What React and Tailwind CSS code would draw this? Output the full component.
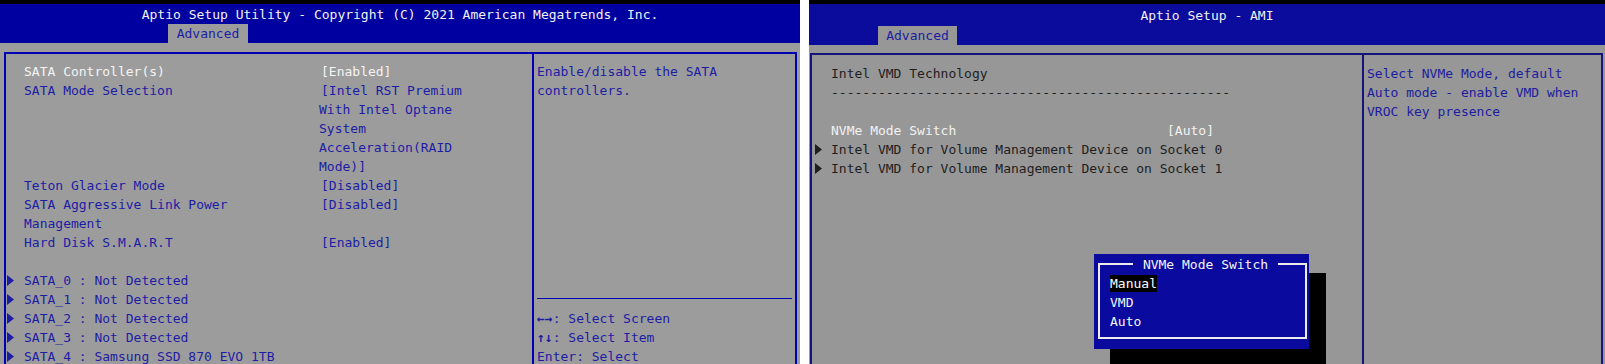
import React from 'react';

const mono = "font-['DejaVu_Sans_Mono',monospace] text-[13px] leading-[19px]";

// 좌측 화면 항목 (label, value lines, selected)
const sataItems = [
  { label: ['SATA Controller(s)'], value: ['[Enabled]'], active: true },
  { label: ['SATA Mode Selection'], value: ['[Intel RST Premium', 'With Intel Optane', 'System', 'Acceleration(RAID', 'Mode)]'] },
  { label: ['Teton Glacier Mode'], value: ['[Disabled]'] },
  { label: ['SATA Aggressive Link Power', 'Management'], value: ['[Disabled]'] },
  { label: ['Hard Disk S.M.A.R.T'], value: ['[Enabled]'] },
];

const sataPorts = [
  'SATA_0 : Not Detected',
  'SATA_1 : Not Detected',
  'SATA_2 : Not Detected',
  'SATA_3 : Not Detected',
  'SATA_4 : Samsung SSD 870 EVO 1TB',
];

function Arrow({ color }) {
  return (
    <svg width="7" height="11" viewBox="0 0 7 11" className="mt-[4px]">
      <polygon points="0,0 7,5.5 0,11" fill={color} />
    </svg>
  );
}

function LeftScreen() {
  return (
    <div className={`flex h-[364px] w-[800px] flex-col overflow-hidden bg-[#9c9c9c] ${mono}`}>
      <div className="h-[4px] shrink-0 bg-black" />
      <div className="flex h-[39px] shrink-0 flex-col bg-[#0000a0] pt-[1px]">
        <div className="text-center text-[#f2f2f2]">
          Aptio Setup Utility - Copyright (C) 2021 American Megatrends, Inc.
        </div>
        <div className="mt-auto pl-[168px]">
          <div className="h-[19px] w-[80px] bg-[#9c9c9c] text-center text-[#1c1ca4]">Advanced</div>
        </div>
      </div>
      <div className="h-[9px] shrink-0" />
      <div className="ml-[4px] flex w-[793px] flex-1 shrink-0 border-2 border-b-0 border-[#0000b4]">
        <div className="w-[526px] pt-[8px]">
          {sataItems.map((item, i) => (
            <div key={i} className="flex">
              <div className="w-[18px]" />
              <div className={`w-[297px] ${item.active ? 'text-[#f4f4f4]' : 'text-[#1c1ca4]'}`}>
                {item.label.map((l) => (
                  <div key={l}>{l}</div>
                ))}
              </div>
              <div className={item.active ? 'text-[#f4f4f4]' : 'text-[#1c1ca4]'}>
                {item.value.map((v, j) => (
                  <div key={v} className={j > 0 ? '-ml-[2px]' : ''}>{v}</div>
                ))}
              </div>
            </div>
          ))}
          <div className="h-[19px]" />
          {sataPorts.map((p) => (
            <div key={p} className="flex text-[#1c1ca4]">
              <div className="w-[18px] pl-[1px]">
                <Arrow color="#1c1ca4" />
              </div>
              <div>{p}</div>
            </div>
          ))}
        </div>
        <div className="flex-1 border-l-2 border-[#0000b4] pt-[8px] pl-[3px] text-[#1c1ca4]">
          <div>Enable/disable the SATA</div>
          <div>controllers.</div>
          <div className="mt-[198px] mr-[3px] h-[1px] bg-[#0000b4]" />
          <div className="pt-[10px]">
            <div><span className="font-bold">←→</span>: Select Screen</div>
            <div><span className="font-bold">↑↓</span>: Select Item</div>
            <div>Enter: Select</div>
          </div>
        </div>
      </div>
    </div>
  );
}

function RightScreen() {
  return (
    <div className={`relative flex h-[364px] w-[796px] flex-col overflow-hidden bg-[#979797] ${mono}`}>
      <div className="h-[4px] shrink-0 bg-black" />
      <div className="flex h-[41px] shrink-0 flex-col bg-[#0c0c9c] pt-[2px]">
        <div className="text-center text-[#f0f0f0]">Aptio Setup - AMI</div>
        <div className="mt-auto pl-[69px]">
          <div className="h-[19px] w-[79px] bg-[#979797] text-center text-[#1c1ca0]">Advanced</div>
        </div>
      </div>
      <div className="h-[8px] shrink-0" />
      <div className="ml-[1px] flex w-[793px] flex-1 border-2 border-b-0 border-[#14147a]">
        <div className="w-[550px] pt-[9px] text-[#1e1e1e]">
          <div className="pl-[19px]">Intel VMD Technology</div>
          <div className="pl-[19px]">{'-'.repeat(51)}</div>
          <div className="h-[19px]" />
          <div className="flex pl-[19px] text-[#f2f2f2]">
            <div className="w-[336px]">NVMe Mode Switch</div>
            <div>[Auto]</div>
          </div>
          {[0, 1].map((n) => (
            <div key={n} className="flex">
              <div className="w-[19px] pl-[3px]">
                <Arrow color="#1e1e1e" />
              </div>
              <div>Intel VMD for Volume Management Device on Socket {n}</div>
            </div>
          ))}
        </div>
        <div className="flex-1 border-l-2 border-[#14147a] pt-[9px] pl-[3px] text-[#1c1ca0]">
          <div>Select NVMe Mode, default</div>
          <div>Auto mode - enable VMD when</div>
          <div>VROC key presence</div>
        </div>
      </div>

      {/* 팝업 그림자 + 선택 창 */}
      <div className="absolute top-[273px] left-[301px] h-[100px] w-[216px] bg-black" />
      <div className="absolute top-[254px] left-[285px] h-[95px] w-[215px] bg-[#0a0a9e] text-[#f4f4f4]">
        <div className="absolute top-[9px] right-[2px] bottom-[10px] left-[4px] border-2 border-[#ececec]" />
        <div className="absolute top-[1px] right-0 left-0 flex justify-center pl-[8px]">
          <span className="bg-[#0a0a9e] px-[10px]">NVMe Mode Switch</span>
        </div>
        <div className="relative pt-[20px] pl-[16px]">
          <div className="flex h-[19px] items-center">
            <span className="bg-black leading-[17px] text-white">Manual</span>
          </div>
          <div>VMD</div>
          <div>Auto</div>
        </div>
      </div>
    </div>
  );
}

export default function App() {
  return (
    <div className="flex h-[364px] w-[1605px] gap-[9px] bg-white">
      <LeftScreen />
      <RightScreen />
    </div>
  );
}
